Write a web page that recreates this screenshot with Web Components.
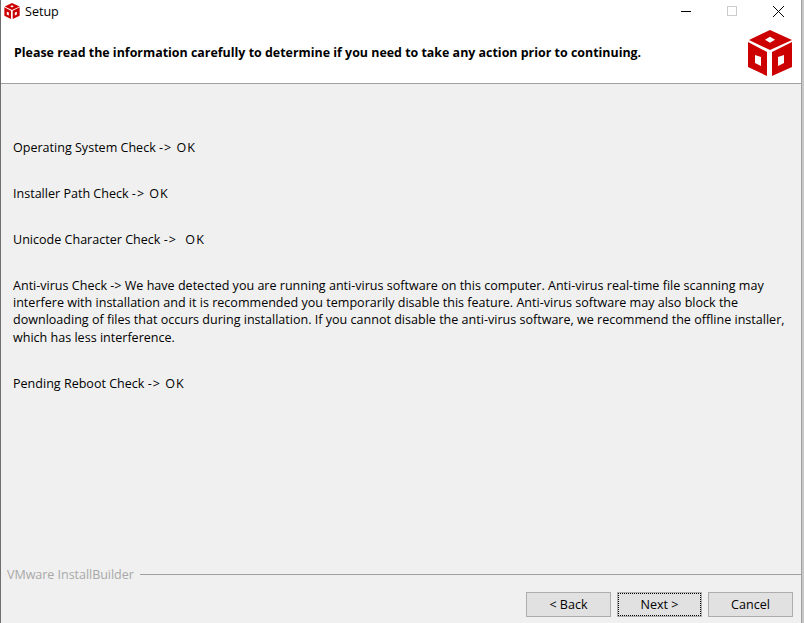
<!DOCTYPE html>
<html>
<head>
<meta charset="utf-8">
<style>
  html, body { margin: 0; padding: 0; height: 100%; background: #c8c8c8; overflow: hidden; }
  .res { letter-spacing: 1px; }
</style>
</head>
<body>
<setup-window>
  <wizard-header slot="header" title-text="Please read the information carefully to determine if you need to take any action prior to continuing."></wizard-header>
  <check-line>Operating System Check <span class="res">-&gt; OK</span></check-line>
  <check-line>Installer Path Check <span class="res">-&gt; OK</span></check-line>
  <check-line>Unicode Character Check <span class="res">-&gt;&nbsp; OK</span></check-line>
  <check-line>Anti-virus Check -&gt; We have detected you are running anti-virus software on this computer. Anti-virus real-time file scanning may<br>interfere with installation and it is recommended you temporarily disable this feature. Anti-virus software may also block the<br>downloading of files that occurs during installation. If you cannot disable the anti-virus software, we recommend the offline installer,<br>which has less interference.</check-line>
  <check-line>Pending Reboot Check <span class="res">-&gt; OK</span></check-line>
  <wizard-footer slot="footer"></wizard-footer>
</setup-window>

<script>
const cubeIcon = `
  <svg viewBox="0 0 44 46" width="100%" height="100%" fill="#cc0000">
    <path fill-rule="evenodd" d="M22 0 L44 10 L22 20 L1 10 Z M22 6.7 L17 9.7 L22 12.7 L27 9.7 Z"/>
    <path fill-rule="evenodd" d="M0 12 L19 22 L19 46 L0 37 Z M7 25 L7 33 L13 36 L13 27 Z"/>
    <path fill-rule="evenodd" d="M44 12 L24 22 L24 46 L44 37 Z M30 27 L30 36 L36 33 L36 25 Z"/>
  </svg>`;

class SetupWindow extends HTMLElement {
  connectedCallback() {
    this.attachShadow({ mode: 'open' });
    this.shadowRoot.innerHTML = `
      <style>
        :host {
          display: flex;
          flex-direction: column;
          box-sizing: border-box;
          width: 802px;
          height: 623px;
          background: #f0f0f0;
          border-left: 1px solid #6e6e6e;
          border-right: 1px solid #a0a0a0;
          color: #000;
          font-family: "Open Sans", "Noto Sans", sans-serif;
          font-size: 12.55px;
        }
        .titlebar {
          display: flex;
          align-items: center;
          height: 22px;
          background: #fff;
          padding: 0 0 1px 3px;
          gap: 5px;
          flex: none;
        }
        .appicon { width: 16px; height: 16px; }
        .title { flex: 1; }
        .controls { display: flex; }
        .controls span {
          display: flex;
          align-items: center;
          justify-content: center;
          width: 46px;
          height: 22px;
        }
        .body {
          flex: 1;
          display: flex;
          flex-direction: column;
          gap: 28.8px;
          padding: 54.9px 12px 0;
          min-height: 0;
        }
      </style>
      <div class="titlebar">
        <span class="appicon">${cubeIcon}</span>
        <span class="title">Setup</span>
        <div class="controls">
          <span><svg width="11" height="11"><path d="M0 5.5H10" stroke="#000"/></svg></span>
          <span><svg width="11" height="11"><rect x=".5" y=".5" width="9" height="9" fill="none" stroke="#ccc"/></svg></span>
          <span><svg width="11" height="11"><path d="M0 0L11 11M11 0L0 11" stroke="#000"/></svg></span>
        </div>
      </div>
      <slot name="header"></slot>
      <div class="body"><slot></slot></div>
      <slot name="footer"></slot>
    `;
  }
}

class WizardHeader extends HTMLElement {
  connectedCallback() {
    this.attachShadow({ mode: 'open' });
    this.shadowRoot.innerHTML = `
      <style>
        :host {
          display: flex;
          align-items: center;
          justify-content: space-between;
          box-sizing: border-box;
          height: 61px;
          flex: none;
          background: #fff;
          border-bottom: 1px solid #a0a0a0;
          padding: 0 9px 0 13px;
        }
        h1 { margin: 0 0 2px; font-size: 12.43px; font-weight: 700; }
        .logo { width: 44px; height: 46px; }
      </style>
      <h1>${this.getAttribute('title-text')}</h1>
      <div class="logo">${cubeIcon}</div>
    `;
  }
}

class CheckLine extends HTMLElement {
  connectedCallback() {
    this.attachShadow({ mode: 'open' });
    this.shadowRoot.innerHTML = `
      <style>
        :host { display: block; line-height: 17.2px; white-space: nowrap; }
      </style>
      <slot></slot>
    `;
  }
}

class WizardFooter extends HTMLElement {
  connectedCallback() {
    this.attachShadow({ mode: 'open' });
    this.shadowRoot.innerHTML = `
      <style>
        :host { display: block; flex: none; height: 57px; }
        .brand {
          display: flex;
          align-items: center;
          gap: 6px;
          height: 16px;
          padding-left: 6px;
          color: #a8a8a8;
          letter-spacing: -0.05px;
        }
        .brand i { flex: 1; height: 1px; background: #a0a0a0; }
        .buttons {
          display: flex;
          justify-content: flex-end;
          gap: 6px;
          padding: 10px 8px 0 0;
        }
        button {
          box-sizing: border-box;
          width: 85px;
          height: 25px;
          padding: 0;
          background: #e1e1e1;
          border: 1px solid #adadad;
          font: inherit;
          color: #000;
        }
        button.focus {
          outline: 1px dotted #000;
          outline-offset: -2px;
        }
      </style>
      <div class="brand"><span>VMware InstallBuilder</span><i></i></div>
      <div class="buttons">
        <button>&lt; Back</button>
        <button class="focus">Next &gt;</button>
        <button>Cancel</button>
      </div>
    `;
  }
}

customElements.define('setup-window', SetupWindow);
customElements.define('wizard-header', WizardHeader);
customElements.define('check-line', CheckLine);
customElements.define('wizard-footer', WizardFooter);
</script>
</body>
</html>
